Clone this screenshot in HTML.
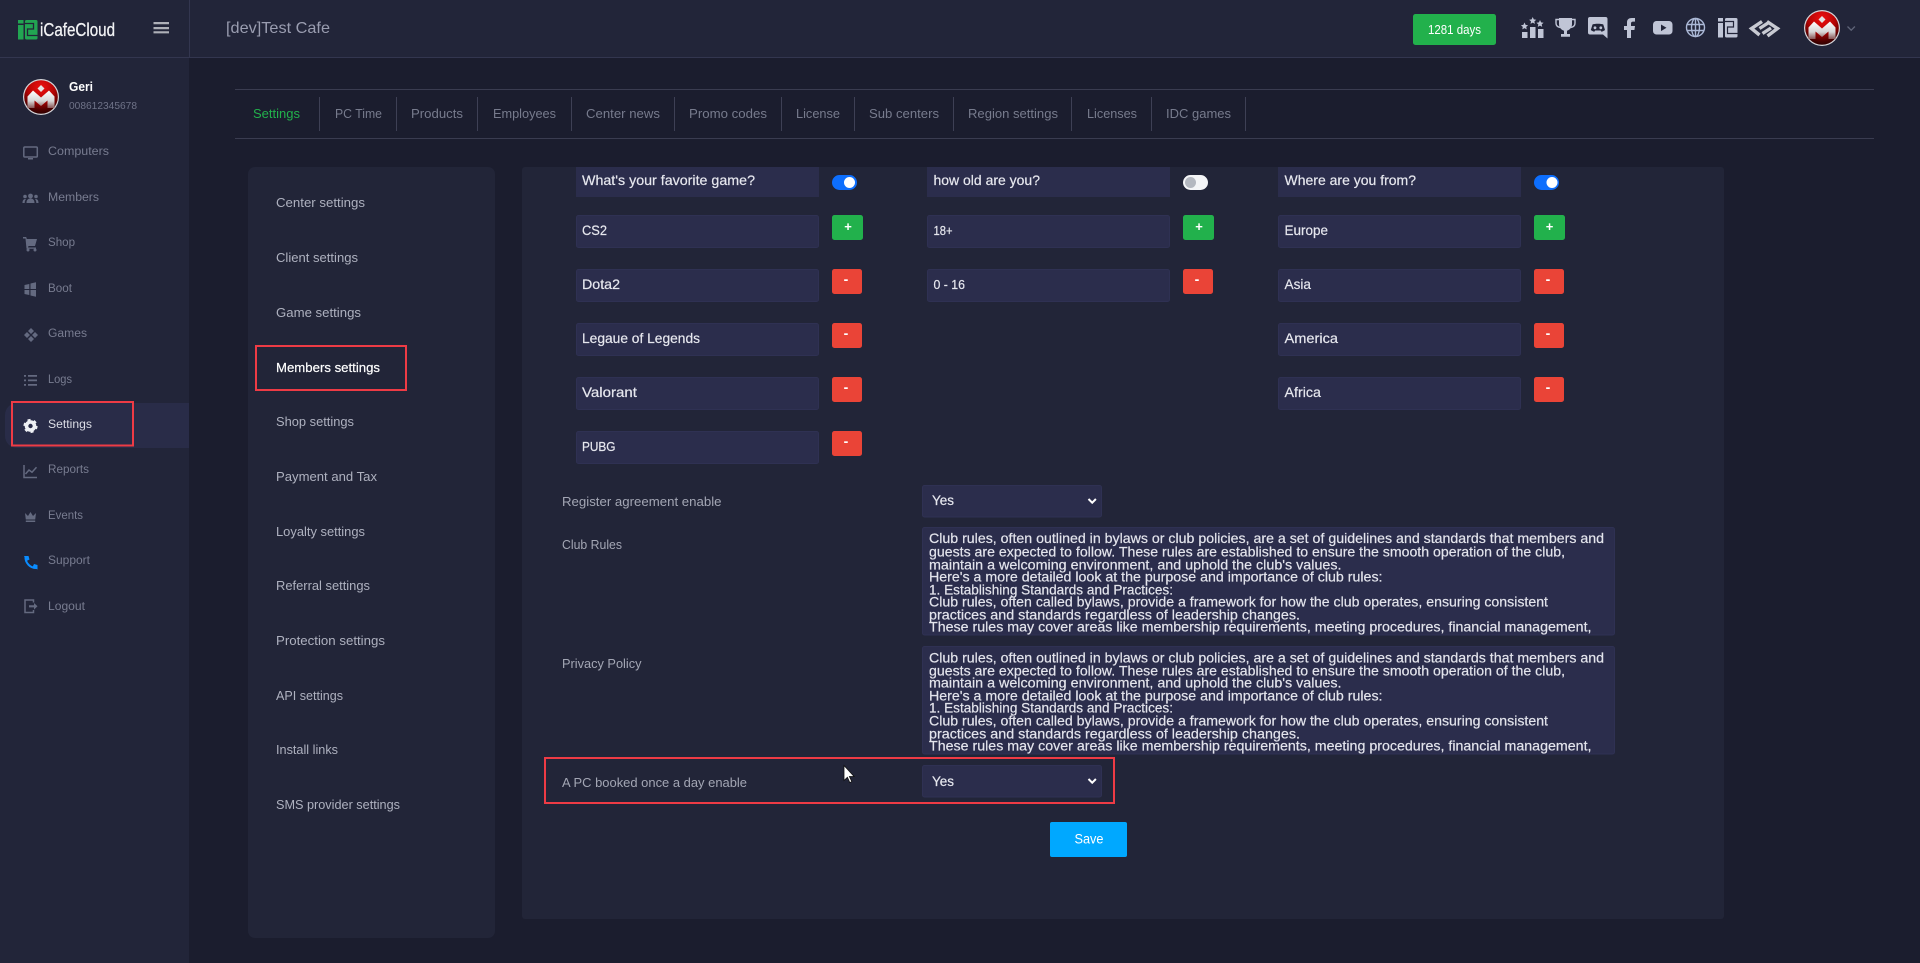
<!DOCTYPE html>
<html lang="en"><head><meta charset="utf-8"><title>iCafeCloud - Members settings</title>
<style>
html,body{margin:0;padding:0;background:#1b1d2e;width:1920px;height:963px;overflow:hidden}
svg{display:block}
text{font-family:"Liberation Sans",sans-serif;white-space:pre}
.m{font-size:11.5px;fill:#787c90}
.l{font-size:13px;fill:#aeb1bf}
.tb{font-size:13px;fill:#777b8d}
.i{font-size:14px;fill:#e6e7ee;stroke:#e6e7ee;stroke-width:.2}
.lb{font-size:12.5px;fill:#a3a6b4}
.ta{font-size:14px;fill:#e3e4ec;stroke:#e3e4ec;stroke-width:.2}
.ip{fill:#2b2d4c;stroke:#2f3153;stroke-width:1}
.g{fill:#22b14c}.r{fill:#ea4437}
.pl{font-size:13px;font-weight:bold;fill:#fff;text-anchor:middle}
.mn{font-size:14px;font-weight:bold;fill:#fff;text-anchor:middle}
.ni{fill:#646a80}
.ns{fill:none;stroke:#646a80;stroke-width:1.5}
.ti{fill:#c0c5d6}
.red{fill:none;stroke:#ee3b45;stroke-width:2}
</style></head><body>
<svg xmlns="http://www.w3.org/2000/svg" width="1920" height="963" viewBox="0 0 1920 963">
<defs>
<radialGradient id="ball" cx="50%" cy="22%" r="80%"><stop offset="0" stop-color="#f01010"/><stop offset=".5" stop-color="#b40404"/><stop offset=".85" stop-color="#4a0000"/><stop offset="1" stop-color="#2a0000"/></radialGradient>
<linearGradient id="sil" x1="0" y1="0" x2="0" y2="1"><stop offset="0" stop-color="#fff"/><stop offset=".6" stop-color="#d6d6d6"/><stop offset="1" stop-color="#8a5555"/></linearGradient>
<clipPath id="c1"><rect x="922" y="527" width="693" height="108"/></clipPath>
<clipPath id="c2"><rect x="922" y="646" width="693" height="108"/></clipPath>
</defs>

<rect width="1920" height="963" fill="#1b1d2e"/>
<!-- sidebar + header -->
<rect x="0" y="0" width="189" height="963" fill="#222539"/>
<rect x="0" y="0" width="1920" height="57" fill="#222539"/>
<rect x="0" y="57" width="1920" height="1" fill="#33364f"/>
<rect x="189" y="0" width="1" height="57" fill="#33364f"/>

<!-- logo -->
<g>
<rect x="18" y="20" width="5.5" height="3.5" fill="#22a552"/><rect x="18" y="25" width="5.5" height="14.5" fill="#22a552"/>
<rect x="25" y="20" width="12.5" height="19.5" rx="1.5" fill="#22a552"/>
<path d="M25 23.5H33.5V29H27.5V35.5H37.5" fill="none" stroke="#222539" stroke-width="1.3"/>
</g>
<text x="40" y="36" font-size="18.5" fill="#f1f2f4" stroke="#f1f2f4" stroke-width=".3" textLength="75" lengthAdjust="spacingAndGlyphs">iCafeCloud</text>
<path d="M153.5 22h15.5v2.2h-15.5zM153.5 27h15.5v2.2h-15.5zM153.5 31.2h15.5v2.2h-15.5z" fill="#aeb0b8"/>
<text x="226" y="33" font-size="16" fill="#9a9db0" textLength="104" lengthAdjust="spacingAndGlyphs">[dev]Test Cafe</text>

<!-- sidebar user -->
<circle cx="41" cy="97" r="18" fill="#d4d4d8"/><circle cx="41" cy="97" r="16.8" fill="url(#ball)"/>
<path d="M41 85l3.500 3.500-3.500 3.500-3.500-3.500z" fill="#e4e4e4"/>
<path d="M27.500 108V96.500L33 90.500l8 7 8-7 5.500 6V108h-7v-7.500l-6.500 5.500-6.500-5.500V108z" fill="url(#sil)"/>
<text x="69" y="91" font-size="12.5" font-weight="bold" fill="#fff" textLength="24" lengthAdjust="spacingAndGlyphs">Geri</text>
<text x="69" y="109" font-size="10.500" fill="#6f7388" textLength="68" lengthAdjust="spacingAndGlyphs">008612345678</text>

<!-- active row -->
<path d="M17 403H189V448H17a12 12 0 0 1-12-12V415a12 12 0 0 1 12-12z" fill="#292c48"/>

<!-- nav icons -->
<rect x="23.800" y="147" width="13.500" height="10" rx="1" class="ns"/><path d="M28 158h5v1.500h-5z" class="ni"/>
<g class="ni"><circle cx="30.500" cy="196" r="2.400"/><circle cx="25" cy="196.500" r="1.800"/><circle cx="36" cy="196.500" r="1.800"/><path d="M26.500 203c0-3 1.500-4.500 4-4.500s4 1.500 4 4.500zM22.500 203c0-2.500 1-4 2.800-4l.7.300c-1 1-1.300 2.200-1.300 3.700zM38.500 203c0-2.500-1-4-2.800-4l-.7.300c1 1 1.300 2.200 1.300 3.700z"/></g>
<g class="ni"><path d="M23 237h3.200l.6 2H37l-2 7H28.500L28 247.500h8v1.200H26.500L25.500 238.500H23z"/><circle cx="28" cy="250" r="1.500"/><circle cx="35" cy="250" r="1.500"/></g>
<path d="M24.500 285l4.800-1v5h-4.800zM30.500 283.500l5.500-1.200v6.700h-5.500zM24.500 290h4.800v5l-4.800-1zM30.500 290h5.500v6.700l-5.500-1.200z" class="ni"/>
<path d="M31 328l3 3-3 3-3-3zM31 336l3 3-3 3-3-3zM27 332l3 3-3 3-3-3zM35 332l3 3-3 3-3-3z" class="ni"/>
<path d="M24 375h2v1.800h-2zM28 375h9v1.800h-9zM24 379.500h2v1.800h-2zM28 379.500h9v1.800h-9zM24 384h2v1.800h-2zM28 384h9v1.800h-9z" class="ni"/>
<circle cx="30.500" cy="426" r="4" fill="none" stroke="#eef0f4" stroke-width="3.600"/><circle cx="30.500" cy="426" r="6" fill="none" stroke="#eef0f4" stroke-width="2.200" stroke-dasharray="3 3.280"/>
<path d="M24 465v12.500h13M25.500 474l3.500-4 3 2.200 4.500-5" class="ns" stroke-width="1.200"/>
<path d="M25 513l3 3 2.500-4 2.500 4 3-3-.8 6.500h-9.400zM25.800 520.500h9.400v1.500h-9.400z" class="ni"/>
<path d="M25.500 556.500c-.5 6.500 5 12 11.500 11.500" fill="none" stroke="#0a8cff" stroke-width="2"/><path d="M24 556h4.500l1 3.500-3 1.500zM37.500 569.500v-4.500l-3.500-1-1.500 3z" fill="#0a8cff"/>
<path d="M33.500 602.500V600h-8.500v12.500h8.500v-2.500" class="ns"/><path d="M29 605.200h5v-2.200l3.500 3.300-3.500 3.300v-2.200h-5z" class="ni"/>

<!-- nav text -->
<text class="m" x="48" y="155" textLength="61" lengthAdjust="spacingAndGlyphs">Computers</text>
<text class="m" x="48" y="201" textLength="51" lengthAdjust="spacingAndGlyphs">Members</text>
<text class="m" x="48" y="246" textLength="27" lengthAdjust="spacingAndGlyphs">Shop</text>
<text class="m" x="48" y="292" textLength="24" lengthAdjust="spacingAndGlyphs">Boot</text>
<text class="m" x="48" y="337" textLength="39" lengthAdjust="spacingAndGlyphs">Games</text>
<text class="m" x="48" y="383" textLength="24" lengthAdjust="spacingAndGlyphs">Logs</text>
<text class="m" x="48" y="428" textLength="44" lengthAdjust="spacingAndGlyphs" style="fill:#dcdee6">Settings</text>
<text class="m" x="48" y="473" textLength="41" lengthAdjust="spacingAndGlyphs">Reports</text>
<text class="m" x="48" y="519" textLength="35" lengthAdjust="spacingAndGlyphs">Events</text>
<text class="m" x="48" y="564" textLength="42" lengthAdjust="spacingAndGlyphs">Support</text>
<text class="m" x="48" y="610" textLength="37" lengthAdjust="spacingAndGlyphs">Logout</text>
<rect x="12" y="402" width="121" height="43.500" class="red"/>

<!-- header right -->
<rect x="1413" y="14" width="83" height="31" rx="2.500" fill="#22b14c"/>
<text x="1428" y="34" font-size="12.500" fill="#fff" textLength="53" lengthAdjust="spacingAndGlyphs">1281 days</text>
<g class="ti">
<rect x="1522" y="32" width="5.500" height="6"/><rect x="1530" y="27" width="5.500" height="11"/><rect x="1538" y="29" width="5.500" height="9"/>
<path d="M1524.500 22.500l1.100 2.400 2.500.3-1.900 1.700.5 2.500-2.200-1.300-2.200 1.300.5-2.500-1.900-1.700 2.500-.3zM1532.700 17l1.100 2.400 2.500.3-1.900 1.700.5 2.500-2.200-1.300-2.200 1.300.5-2.500-1.900-1.700 2.500-.3zM1540 20l1.100 2.400 2.500.3-1.900 1.700.5 2.500-2.200-1.300-2.200 1.300.5-2.500-1.900-1.700 2.500-.3z"/>
<path d="M1559 18h13v6c0 3.800-2.500 6-5 6.800v3.200h3v2.800h-9V34h3v-3.200c-2.500-.8-5-3-5-6.800z"/>
<path d="M1559.500 19.500H1556v3.500c0 2.500 1.800 4 4 4.500M1571.500 19.500h3.500v3.500c0 2.500-1.800 4-4 4.500" fill="none" stroke="#c0c5d6" stroke-width="1.400"/>
<path d="M1590 17h15.500a2 2 0 0 1 2 2v19.500l-4.500-4H1590a2 2 0 0 1-2-2V19a2 2 0 0 1 2-2z"/>
<path d="M1627 38V30h-3v-4h3v-3.500c0-3 1.800-4.500 4.800-4.500h3.200v3.600h-2c-1.400 0-2 .7-2 2V26h4l-.6 4h-3.400v8z"/>
<rect x="1653" y="21" width="19.500" height="13.500" rx="3.500"/>
<rect x="1718" y="18" width="5" height="3.500"/><rect x="1718" y="23" width="5" height="14.500"/><rect x="1725" y="18" width="12.500" height="19.500" rx="1.500"/>
</g>
<path d="M1661 24.500l5.500 3.300-5.500 3.300z" fill="#222539"/>
<path d="M1592.500 24.500c2-1 8.800-1 10.800 0l1.700 5.500c-1.200 1-2.500 1.500-3.500 1.800l-.8-1.300h-5.600l-.8 1.300c-1-.3-2.300-.8-3.500-1.800z" fill="#222539"/>
<circle cx="1595" cy="27.800" r="1.400" fill="#c0c5d6"/><circle cx="1600.800" cy="27.800" r="1.400" fill="#c0c5d6"/>
<path d="M1725 21.500H1733.500V27H1727.500V33.500H1737.500" fill="none" stroke="#222539" stroke-width="1.200"/>
<g fill="none" stroke="#abb8d6" stroke-width="1.400"><circle cx="1695.500" cy="27.500" r="9"/><ellipse cx="1695.500" cy="27.500" rx="4" ry="9"/><path d="M1695.500 18.500v18M1687 24.500h17M1687 30.500h17"/></g>
<g fill="none" stroke="#c8cad2" stroke-width="3.400"><path d="M1762 21.500l-10.500 7 8 6.500"/><path d="M1767 21.500l10.500 7-10 7.500"/><path d="M1759.500 28.500l8.500-5.500"/><path d="M1762.500 33.500l8.500-5.500"/></g>
<circle cx="1822" cy="28" r="18" fill="#d4d4d8"/><circle cx="1822" cy="28" r="16.800" fill="url(#ball)"/>
<path d="M1822 16l3.500 3.500-3.500 3.500-3.500-3.500z" fill="#e4e4e4"/>
<path d="M1808.500 39V27.500l5.500-6 8 7 8-7 5.500 6V39h-7v-7.500l-6.500 5.500-6.500-5.500V39z" fill="url(#sil)"/>
<path d="M1847.500 26.500l3.700 3.700 3.700-3.700" fill="none" stroke="#5f6478" stroke-width="1.300"/>

<!-- tabs -->
<rect x="235" y="89" width="1639" height="1" fill="#3a3c50"/>
<rect x="235" y="138" width="1639" height="1" fill="#3a3c50"/>
<g fill="#3e4055"><rect x="319" y="97" width="1" height="34"/><rect x="396" y="97" width="1" height="34"/><rect x="477" y="97" width="1" height="34"/><rect x="571" y="97" width="1" height="34"/><rect x="674" y="97" width="1" height="34"/><rect x="781" y="97" width="1" height="34"/><rect x="854" y="97" width="1" height="34"/><rect x="953" y="97" width="1" height="34"/><rect x="1071" y="97" width="1" height="34"/><rect x="1151" y="97" width="1" height="34"/><rect x="1245" y="97" width="1" height="34"/></g>
<text class="tb" x="253" y="118" textLength="47" lengthAdjust="spacingAndGlyphs" style="fill:#22b14c">Settings</text>
<text class="tb" x="335" y="118" textLength="47" lengthAdjust="spacingAndGlyphs">PC Time</text>
<text class="tb" x="411" y="118" textLength="52" lengthAdjust="spacingAndGlyphs">Products</text>
<text class="tb" x="493" y="118" textLength="63" lengthAdjust="spacingAndGlyphs">Employees</text>
<text class="tb" x="586" y="118" textLength="74" lengthAdjust="spacingAndGlyphs">Center news</text>
<text class="tb" x="689" y="118" textLength="78" lengthAdjust="spacingAndGlyphs">Promo codes</text>
<text class="tb" x="796" y="118" textLength="44" lengthAdjust="spacingAndGlyphs">License</text>
<text class="tb" x="869" y="118" textLength="70" lengthAdjust="spacingAndGlyphs">Sub centers</text>
<text class="tb" x="968" y="118" textLength="90" lengthAdjust="spacingAndGlyphs">Region settings</text>
<text class="tb" x="1087" y="118" textLength="50" lengthAdjust="spacingAndGlyphs">Licenses</text>
<text class="tb" x="1166" y="118" textLength="65" lengthAdjust="spacingAndGlyphs">IDC games</text>

<!-- left settings panel -->
<rect x="248" y="167" width="247" height="771" rx="7" fill="#222538"/>
<text class="l" x="276" y="207" textLength="89" lengthAdjust="spacingAndGlyphs">Center settings</text>
<text class="l" x="276" y="262" textLength="82" lengthAdjust="spacingAndGlyphs">Client settings</text>
<text class="l" x="276" y="317" textLength="85" lengthAdjust="spacingAndGlyphs">Game settings</text>
<text class="l" x="276" y="372" textLength="104" lengthAdjust="spacingAndGlyphs" style="fill:#fff;stroke:#fff;stroke-width:.2">Members settings</text>
<text class="l" x="276" y="426" textLength="78" lengthAdjust="spacingAndGlyphs">Shop settings</text>
<text class="l" x="276" y="481" textLength="101" lengthAdjust="spacingAndGlyphs">Payment and Tax</text>
<text class="l" x="276" y="536" textLength="89" lengthAdjust="spacingAndGlyphs">Loyalty settings</text>
<text class="l" x="276" y="590" textLength="94" lengthAdjust="spacingAndGlyphs">Referral settings</text>
<text class="l" x="276" y="645" textLength="109" lengthAdjust="spacingAndGlyphs">Protection settings</text>
<text class="l" x="276" y="700" textLength="67" lengthAdjust="spacingAndGlyphs">API settings</text>
<text class="l" x="276" y="754" textLength="62" lengthAdjust="spacingAndGlyphs">Install links</text>
<text class="l" x="276" y="809" textLength="124" lengthAdjust="spacingAndGlyphs">SMS provider settings</text>
<rect x="256" y="346" width="150" height="44" class="red"/>

<!-- main panel -->
<rect x="522" y="167" width="1202" height="752" rx="3" fill="#222538"/>

<!-- column 1 -->
<rect x="576" y="167" width="243" height="30" fill="#2b2d4c"/>
<rect class="ip" x="576.500" y="215.500" width="242" height="32" rx="2"/>
<rect class="ip" x="576.500" y="269.500" width="242" height="32" rx="2"/>
<rect class="ip" x="576.500" y="323.500" width="242" height="32" rx="2"/>
<rect class="ip" x="576.500" y="377.500" width="242" height="32" rx="2"/>
<rect class="ip" x="576.500" y="431.500" width="242" height="32" rx="2"/>
<text class="i" x="582" y="185" textLength="173" lengthAdjust="spacingAndGlyphs">What's your favorite game?</text>
<text class="i" x="582" y="235" style="font-size:13.500px" textLength="25" lengthAdjust="spacingAndGlyphs">CS2</text>
<text class="i" x="582" y="289" textLength="38" lengthAdjust="spacingAndGlyphs">Dota2</text>
<text class="i" x="582" y="343" textLength="118" lengthAdjust="spacingAndGlyphs">Legaue of Legends</text>
<text class="i" x="582" y="397" textLength="55" lengthAdjust="spacingAndGlyphs">Valorant</text>
<text class="i" x="582" y="451" style="font-size:13px" textLength="33.500" lengthAdjust="spacingAndGlyphs">PUBG</text>
<rect x="832" y="175" width="25" height="15" rx="7.500" fill="#0d6efd"/><circle cx="849.500" cy="182.500" r="5.500" fill="#fff"/>
<rect class="g" x="832" y="215" width="31" height="25" rx="2.500"/><text class="pl" x="848" y="231">+</text>
<rect class="r" x="832" y="269" width="30" height="25" rx="2.500"/><text class="mn" x="846" y="284">-</text>
<rect class="r" x="832" y="323" width="30" height="25" rx="2.500"/><text class="mn" x="846" y="338">-</text>
<rect class="r" x="832" y="377" width="30" height="25" rx="2.500"/><text class="mn" x="846" y="392">-</text>
<rect class="r" x="832" y="431" width="30" height="25" rx="2.500"/><text class="mn" x="846" y="446">-</text>

<!-- column 2 -->
<rect x="927" y="167" width="243" height="30" fill="#2b2d4c"/>
<rect class="ip" x="927.500" y="215.500" width="242" height="32" rx="2"/>
<rect class="ip" x="927.500" y="269.500" width="242" height="32" rx="2"/>
<text class="i" x="933.500" y="185" textLength="106.500" lengthAdjust="spacingAndGlyphs">how old are you?</text>
<text class="i" x="933.500" y="235" style="font-size:13px" textLength="19" lengthAdjust="spacingAndGlyphs">18+</text>
<text class="i" x="933.500" y="289" style="font-size:13px" textLength="31.500" lengthAdjust="spacingAndGlyphs">0 - 16</text>
<rect x="1183" y="175" width="25" height="15" rx="7.500" fill="#f4f5f7"/><circle cx="1190.500" cy="182.500" r="5.500" fill="#b4b8c0"/>
<rect class="g" x="1183" y="215" width="31" height="25" rx="2.500"/><text class="pl" x="1199" y="231">+</text>
<rect class="r" x="1183" y="269" width="30" height="25" rx="2.500"/><text class="mn" x="1197" y="284">-</text>

<!-- column 3 -->
<rect x="1278" y="167" width="243" height="30" fill="#2b2d4c"/>
<rect class="ip" x="1278.500" y="215.500" width="242" height="32" rx="2"/>
<rect class="ip" x="1278.500" y="269.500" width="242" height="32" rx="2"/>
<rect class="ip" x="1278.500" y="323.500" width="242" height="32" rx="2"/>
<rect class="ip" x="1278.500" y="377.500" width="242" height="32" rx="2"/>
<text class="i" x="1284.500" y="185" textLength="131.500" lengthAdjust="spacingAndGlyphs">Where are you from?</text>
<text class="i" x="1284.500" y="235" textLength="43.500" lengthAdjust="spacingAndGlyphs">Europe</text>
<text class="i" x="1284.500" y="289" textLength="26.500" lengthAdjust="spacingAndGlyphs">Asia</text>
<text class="i" x="1284.500" y="343" textLength="53.500" lengthAdjust="spacingAndGlyphs">America</text>
<text class="i" x="1284.500" y="397" textLength="36.500" lengthAdjust="spacingAndGlyphs">Africa</text>
<rect x="1534" y="175" width="25" height="15" rx="7.500" fill="#0d6efd"/><circle cx="1552" cy="182.500" r="5.500" fill="#fff"/>
<rect class="g" x="1534" y="215" width="31" height="25" rx="2.500"/><text class="pl" x="1549.500" y="231">+</text>
<rect class="r" x="1534" y="269" width="30" height="25" rx="2.500"/><text class="mn" x="1548" y="284">-</text>
<rect class="r" x="1534" y="323" width="30" height="25" rx="2.500"/><text class="mn" x="1548" y="338">-</text>
<rect class="r" x="1534" y="377" width="30" height="25" rx="2.500"/><text class="mn" x="1548" y="392">-</text>

<!-- form rows -->
<text class="lb" x="562" y="506" textLength="159.500" lengthAdjust="spacingAndGlyphs">Register agreement enable</text>
<rect class="ip" x="922.500" y="485.500" width="179" height="31.500" rx="2"/>
<text class="i" x="932" y="505" textLength="22" lengthAdjust="spacingAndGlyphs">Yes</text>
<path d="M1088.500 499l3.700 3.700 3.700-3.700" fill="none" stroke="#fff" stroke-width="2"/>

<text class="lb" x="562" y="549" textLength="60" lengthAdjust="spacingAndGlyphs">Club Rules</text>
<rect class="ip" x="922.500" y="527.500" width="692" height="107.500" rx="2"/>
<g clip-path="url(#c1)">
<text class="ta" x="929" y="543" textLength="675" lengthAdjust="spacingAndGlyphs">Club rules, often outlined in bylaws or club policies, are a set of guidelines and standards that members and</text>
<text class="ta" x="929" y="556.500" textLength="636" lengthAdjust="spacingAndGlyphs">guests are expected to follow. These rules are established to ensure the smooth operation of the club,</text>
<text class="ta" x="929" y="569.500" textLength="412.500" lengthAdjust="spacingAndGlyphs">maintain a welcoming environment, and uphold the club's values.</text>
<text class="ta" x="929" y="581.500" textLength="453.500" lengthAdjust="spacingAndGlyphs">Here's a more detailed look at the purpose and importance of club rules:</text>
<text class="ta" x="929" y="594.500" textLength="244" lengthAdjust="spacingAndGlyphs">1. Establishing Standards and Practices:</text>
<text class="ta" x="929" y="606.500" textLength="619" lengthAdjust="spacingAndGlyphs">Club rules, often called bylaws, provide a framework for how the club operates, ensuring consistent</text>
<text class="ta" x="929" y="619.500" textLength="371" lengthAdjust="spacingAndGlyphs">practices and standards regardless of leadership changes.</text>
<text class="ta" x="929" y="631.500" textLength="662.500" lengthAdjust="spacingAndGlyphs">These rules may cover areas like membership requirements, meeting procedures, financial management,</text>
</g>

<text class="lb" x="562" y="668" textLength="79.500" lengthAdjust="spacingAndGlyphs">Privacy Policy</text>
<rect class="ip" x="922.500" y="646.500" width="692" height="107.500" rx="2"/>
<g clip-path="url(#c2)">
<text class="ta" x="929" y="662.500" textLength="675" lengthAdjust="spacingAndGlyphs">Club rules, often outlined in bylaws or club policies, are a set of guidelines and standards that members and</text>
<text class="ta" x="929" y="675.500" textLength="636" lengthAdjust="spacingAndGlyphs">guests are expected to follow. These rules are established to ensure the smooth operation of the club,</text>
<text class="ta" x="929" y="687.500" textLength="412.500" lengthAdjust="spacingAndGlyphs">maintain a welcoming environment, and uphold the club's values.</text>
<text class="ta" x="929" y="700.500" textLength="453.500" lengthAdjust="spacingAndGlyphs">Here's a more detailed look at the purpose and importance of club rules:</text>
<text class="ta" x="929" y="712.500" textLength="244" lengthAdjust="spacingAndGlyphs">1. Establishing Standards and Practices:</text>
<text class="ta" x="929" y="725.500" textLength="619" lengthAdjust="spacingAndGlyphs">Club rules, often called bylaws, provide a framework for how the club operates, ensuring consistent</text>
<text class="ta" x="929" y="738.500" textLength="371" lengthAdjust="spacingAndGlyphs">practices and standards regardless of leadership changes.</text>
<text class="ta" x="929" y="750.500" textLength="662.500" lengthAdjust="spacingAndGlyphs">These rules may cover areas like membership requirements, meeting procedures, financial management,</text>
</g>

<text class="lb" x="562" y="787" textLength="185" lengthAdjust="spacingAndGlyphs">A PC booked once a day enable</text>
<rect class="ip" x="922.500" y="765.500" width="179" height="31.500" rx="2"/>
<text class="i" x="932" y="786" textLength="22" lengthAdjust="spacingAndGlyphs">Yes</text>
<path d="M1088.500 779l3.700 3.700 3.700-3.700" fill="none" stroke="#fff" stroke-width="2"/>
<rect x="545" y="758" width="569" height="45" class="red"/>
<path d="M844 765.500v15l3.400-3.200 2.400 5.300 2-1-2.400-5.100h4.700z" fill="#fff" stroke="#111" stroke-width=".8"/>

<rect x="1050" y="822" width="77" height="35" rx="2" fill="#00a8ff"/>
<text x="1074.500" y="843.500" font-size="13.500" fill="#fff" textLength="29" lengthAdjust="spacingAndGlyphs">Save</text>
</svg>
</body></html>
